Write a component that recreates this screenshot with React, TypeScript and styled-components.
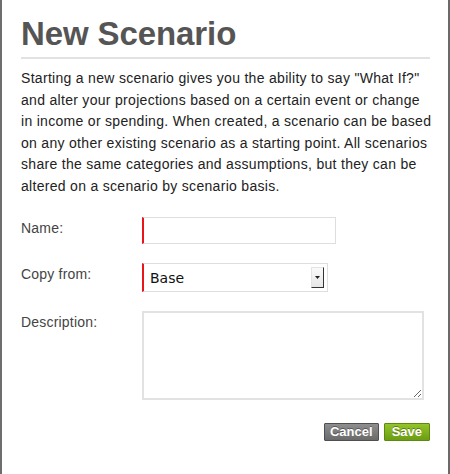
import React from "react";
import styled, { createGlobalStyle } from "styled-components";

const GlobalStyle = createGlobalStyle`
  html, body {
    margin: 0;
    padding: 0;
    background: #fff;
  }
  body {
    font-family: "Liberation Sans", Arial, Helvetica, sans-serif;
  }
`;

export default function App() {
  return (
    <>
      <GlobalStyle />
      <Dialog>
        <Title>New Scenario</Title>
        <Rule />
        <Intro>
          Starting a new scenario gives you the ability to say "What If?" and
          alter your projections based on a certain event or change in income
          or spending. When created, a scenario can be based on any other
          existing scenario as a starting point. All scenarios share the same
          categories and assumptions, but they can be altered on a scenario by
          scenario basis.
        </Intro>

        <FormGrid>
          <Label htmlFor="name">Name:</Label>
          <TextInput id="name" type="text" />

          <Label htmlFor="copy">Copy from:</Label>
          <SelectBox id="copy">
            <SelectValue>Base</SelectValue>
            <SelectArrow>
              <svg width="5" height="3" viewBox="0 0 5 3">
                <path d="M0 0 L5 0 L2.5 3 Z" fill="#222" />
              </svg>
            </SelectArrow>
          </SelectBox>

          <Label htmlFor="desc">Description:</Label>
          <TextArea id="desc" />
        </FormGrid>

        <Actions>
          <ActionButton $variant="cancel">Cancel</ActionButton>
          <ActionButton $variant="save">Save</ActionButton>
        </Actions>
      </Dialog>
    </>
  );
}

const Dialog = styled.div`
  box-sizing: border-box;
  width: 450px;
  height: 474px;
  border-left: 2px solid #6e6e6e;
  border-right: 2px solid #6a6a6a;
  padding: 14px 18px 0 19px;
  background: #fff;
`;

const Title = styled.h1`
  margin: 0;
  font-size: 33px;
  line-height: 40px;
  font-weight: bold;
  color: #555;
  letter-spacing: -0.1px;
`;

const Rule = styled.div`
  height: 2px;
  background: #e2e2e2;
  margin-top: 3px;
`;

const Intro = styled.p`
  margin: 9px -4px 0 0;
  font-size: 14px;
  line-height: 21.6px;
  letter-spacing: 0.3px;
  color: #222;
`;

const FormGrid = styled.div`
  display: grid;
  grid-template-columns: 121px auto;
  justify-content: start;
  align-items: start;
  row-gap: 19px;
  margin-top: 19px;
`;

const Label = styled.label`
  font-size: 14px;
  line-height: 16px;
  padding-top: 3px;
  color: #444;
  letter-spacing: 0.2px;
`;

const TextInput = styled.input`
  box-sizing: border-box;
  width: 194px;
  height: 27px;
  margin: 0;
  border: 1px solid #dedede;
  border-left: 2px solid #e8161b;
  outline: none;
  background: #fff;
`;

const SelectBox = styled.div`
  box-sizing: border-box;
  width: 186px;
  height: 29px;
  display: flex;
  align-items: center;
  justify-content: space-between;
  border: 1px solid #dedede;
  border-left: 2px solid #e8161b;
  padding: 0 3px 0 6px;
  background: #fff;
`;

const SelectValue = styled.span`
  font-family: "DejaVu Sans", Verdana, sans-serif;
  font-size: 14px;
  color: #111;
  padding-top: 1px;
`;

const SelectArrow = styled.span`
  box-sizing: border-box;
  width: 13px;
  height: 21px;
  display: flex;
  align-items: center;
  justify-content: center;
  background: linear-gradient(#fafafa, #e6e6e6);
  border-top: 1px solid #e4e4e4;
  border-left: 1px solid #e4e4e4;
  border-right: 1px solid #333;
  border-bottom: 1px solid #333;
`;

const TextArea = styled.textarea`
  box-sizing: border-box;
  width: 282px;
  height: 89px;
  margin: 0;
  border: 2px solid #e2e2e2;
  outline: none;
  resize: both;
  background: #fff;
`;

const Actions = styled.div`
  display: flex;
  justify-content: flex-end;
  gap: 5px;
  margin-top: 23px;
`;

const ActionButton = styled.button<{ $variant: "cancel" | "save" }>`
  box-sizing: border-box;
  height: 18px;
  margin: 0;
  padding: 0 ${(p) => (p.$variant === "cancel" ? "5px" : "7px")};
  font-family: "Liberation Sans", Arial, sans-serif;
  font-size: 13px;
  font-weight: bold;
  line-height: 16px;
  color: #fff;
  text-shadow: 0 -1px 0 rgba(0, 0, 0, 0.35);
  border-radius: 1px;
  cursor: pointer;
  border: 1px solid
    ${(p) => (p.$variant === "cancel" ? "#4f4f4f" : "#5c8a0e")};
  background: ${(p) =>
    p.$variant === "cancel"
      ? "linear-gradient(#8e8e8e, #6a6a6a)"
      : "linear-gradient(#93c42b, #6c9d12)"};
`;
